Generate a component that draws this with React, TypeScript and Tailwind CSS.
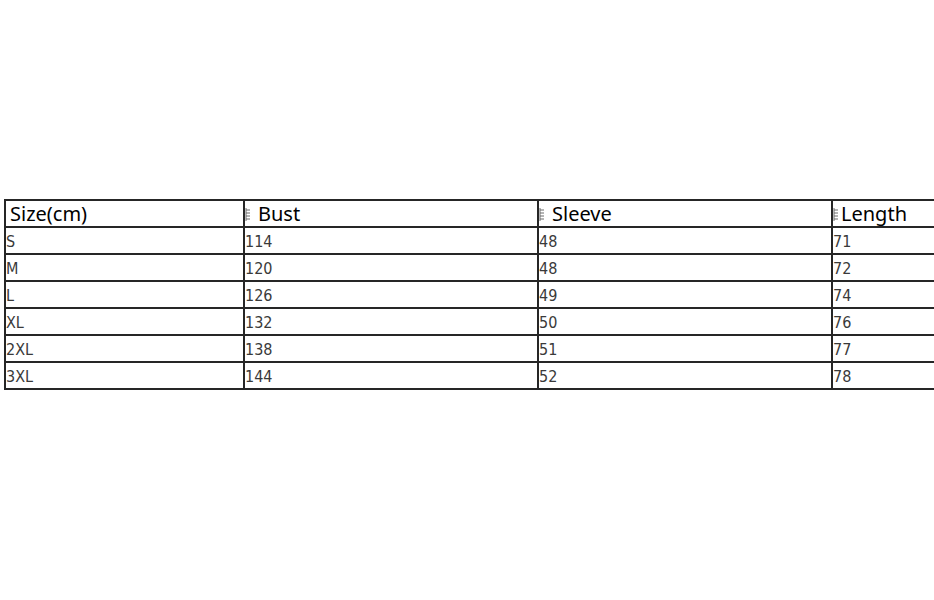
const headers = ["Size(cm)", "Bust", "Sleeve", "Length"];

const rows = [
  ["S", "114", "48", "71"],
  ["M", "120", "48", "72"],
  ["L", "126", "49", "74"],
  ["XL", "132", "50", "76"],
  ["2XL", "138", "51", "77"],
  ["3XL", "144", "52", "78"],
];

const colWidths = ["w-[239px]", "w-[294px]", "w-[294px]", "w-[300px]"];

// leftover bits of a clipped glyph in front of the header labels
function Stub() {
  return (
    <svg width="6" height="16" viewBox="0 0 6 16" className="shrink-0">
      <path d="M1 2v13M1 4h4M1 7h4M1 10h4M1 13h4" stroke="#6b6b6b" strokeWidth="1" fill="none" />
    </svg>
  );
}

export default function App() {
  return (
    <div className="w-[934px] h-[600px] overflow-hidden bg-white">
      <div className="pt-[199px] pl-[4px]">
        <div className="w-[1128px] border-t-2 border-l-2 border-[#262626]">
          <div className="flex h-[27px] border-b-2 border-[#262626]">
            {headers.map((h, i) => (
              <div
                key={h}
                className={`${colWidths[i]} shrink-0 flex items-center h-full border-r-2 border-[#262626] font-['Noto_Sans','Open_Sans',sans-serif] text-[20px] leading-none text-black`}
              >
                {i > 0 && <Stub />}
                <span className={i === 0 ? "pl-[4px]" : i === 3 ? "pl-[2px]" : "pl-[7px]"}>{h}</span>
              </div>
            ))}
          </div>
          {rows.map((r) => (
            <div key={r[0]} className="flex h-[27px] border-b-2 border-[#262626]">
              {r.map((c, i) => (
                <div
                  key={i}
                  className={`${colWidths[i]} shrink-0 flex items-center pt-[3px] h-full border-r-2 border-[#262626] font-['DejaVu_Sans_Condensed','DejaVu_Sans',sans-serif] text-[16px] leading-none text-[#3a3a3a]`}
                >
                  {c}
                </div>
              ))}
            </div>
          ))}
        </div>
      </div>
    </div>
  );
}
